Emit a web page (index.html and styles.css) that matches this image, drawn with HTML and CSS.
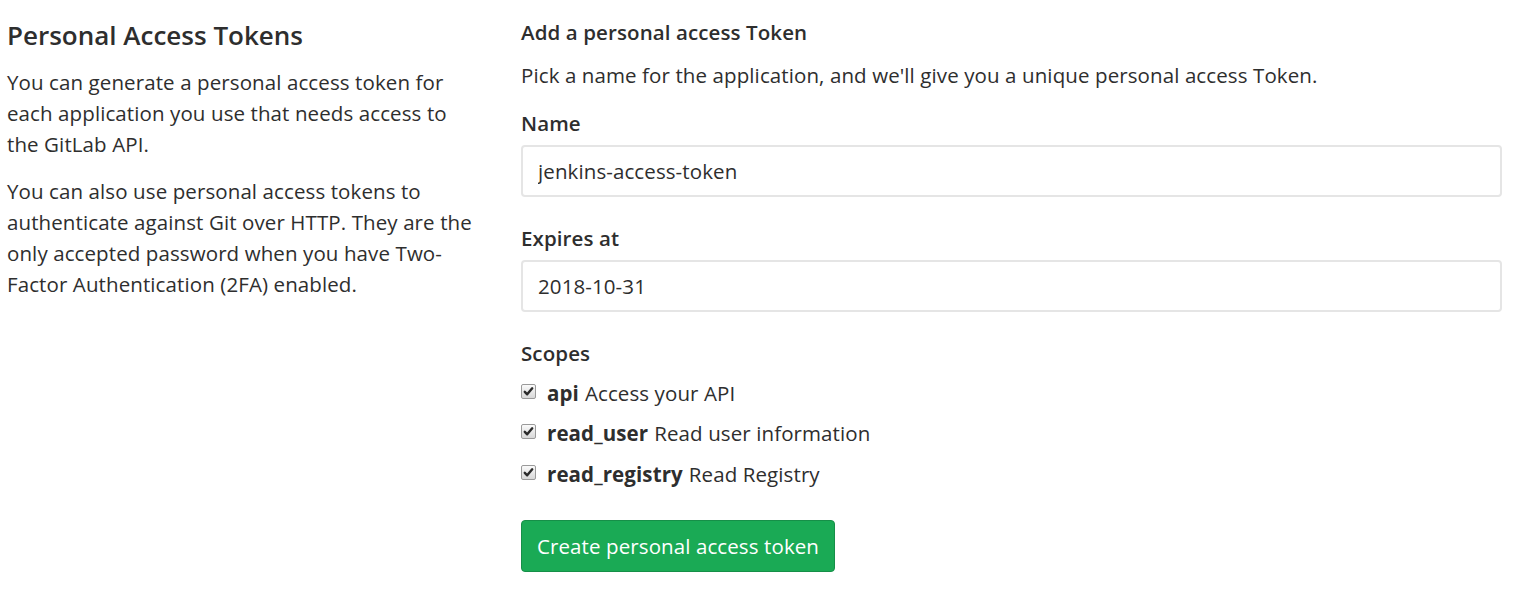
FILE: index.html
```html
<!DOCTYPE html>
<html lang="en">
<head>
<meta charset="utf-8">
<title>Personal Access Tokens</title>
<link rel="stylesheet" href="styles.css">
</head>
<body>
<div class="page">
  <aside class="intro">
    <h4 class="intro-title">Personal Access Tokens</h4>
    <p>You can generate a personal access token for each application you use that needs access to the GitLab API.</p>
    <p>You can also use personal access tokens to authenticate against Git over HTTP. They are the only accepted password when you have Two-Factor Authentication (2FA) enabled.</p>
  </aside>
  <form class="token-form">
    <h5 class="form-title">Add a personal access Token</h5>
    <p class="form-help">Pick a name for the application, and we'll give you a unique personal access Token.</p>
    <div class="field">
      <label class="label" for="name">Name</label>
      <input class="input" id="name" type="text" value="jenkins-access-token">
    </div>
    <div class="field">
      <label class="label" for="expires">Expires at</label>
      <input class="input" id="expires" type="text" value="2018-10-31">
    </div>
    <div class="field scopes">
      <div class="label">Scopes</div>
      <label class="scope"><span class="check"><svg viewBox="0 0 14 14"><path d="M3 7.4 L5.6 10 L11 3.6" fill="none" stroke="#2b2b2b" stroke-width="2.6" stroke-linecap="round" stroke-linejoin="round"/></svg></span><b>api</b> Access your API</label>
      <label class="scope"><span class="check"><svg viewBox="0 0 14 14"><path d="M3 7.4 L5.6 10 L11 3.6" fill="none" stroke="#2b2b2b" stroke-width="2.6" stroke-linecap="round" stroke-linejoin="round"/></svg></span><b>read_user</b> Read user information</label>
      <label class="scope"><span class="check"><svg viewBox="0 0 14 14"><path d="M3 7.4 L5.6 10 L11 3.6" fill="none" stroke="#2b2b2b" stroke-width="2.6" stroke-linecap="round" stroke-linejoin="round"/></svg></span><b>read_registry</b> Read Registry</label>
    </div>
    <div class="actions">
      <button type="button" class="btn-create">Create personal access token</button>
    </div>
  </form>
</div>
</body>
</html>
```
FILE: styles.css
```css
* { box-sizing: border-box; }
body {
  margin: 0;
  background: #fff;
  color: #2e2e2e;
  font-family: "Open Sans", "Lato", sans-serif;
  font-size: 20.5px;
  letter-spacing: 0.1px;
  line-height: 31px;
}
.page {
  display: grid;
  grid-template-columns: 470px 981px;
  column-gap: 44px;
  padding: 0 0 0 7px;
}
.intro-title {
  margin: 18px 0 15px;
  font-size: 26px;
  line-height: 34px;
  font-weight: 600;
  letter-spacing: 0;
}
.intro p {
  margin: 0 0 16px;
}
.token-form {
  padding-top: 17px;
}
.form-title {
  margin: 0 0 12px;
  font-size: 20.5px;
  line-height: 31px;
  font-weight: 600;
}
.form-help {
  margin: 0 0 17px;
}
.field {
  display: flex;
  flex-direction: column;
  margin-bottom: 26px;
}
.label {
  font-weight: 600;
  margin-bottom: 6px;
}
.input {
  display: block;
  height: 52px;
  flex: none;
  border: 2px solid #e5e5e5;
  border-radius: 4px;
  padding: 0 15px;
  font: inherit;
  letter-spacing: inherit;
  color: #2e2e2e;
  outline: none;
}
.scopes {
  margin-bottom: 25px;
}
.scopes .label {
  margin-bottom: 4px;
}
.scope {
  display: flex;
  align-items: center;
  height: 40.5px;
}
.scope b { font-weight: 700; margin-right: 6px; }
.check {
  display: inline-flex;
  width: 15px;
  height: 15px;
  margin: 0 11px 4px 0;
  border: 1px solid #9a9a9a;
  border-radius: 2px;
  background: linear-gradient(#fafafa, #d8d8d8);
  align-items: center;
  justify-content: center;
}
.check svg { width: 13px; height: 13px; display: block; }
.btn-create {
  height: 52px;
  padding: 2px 15px 0;
  background: #1aaa55;
  border: 1px solid #168f48;
  border-radius: 4px;
  color: #fff;
  font: inherit;
  letter-spacing: inherit;
  cursor: pointer;
}
```
